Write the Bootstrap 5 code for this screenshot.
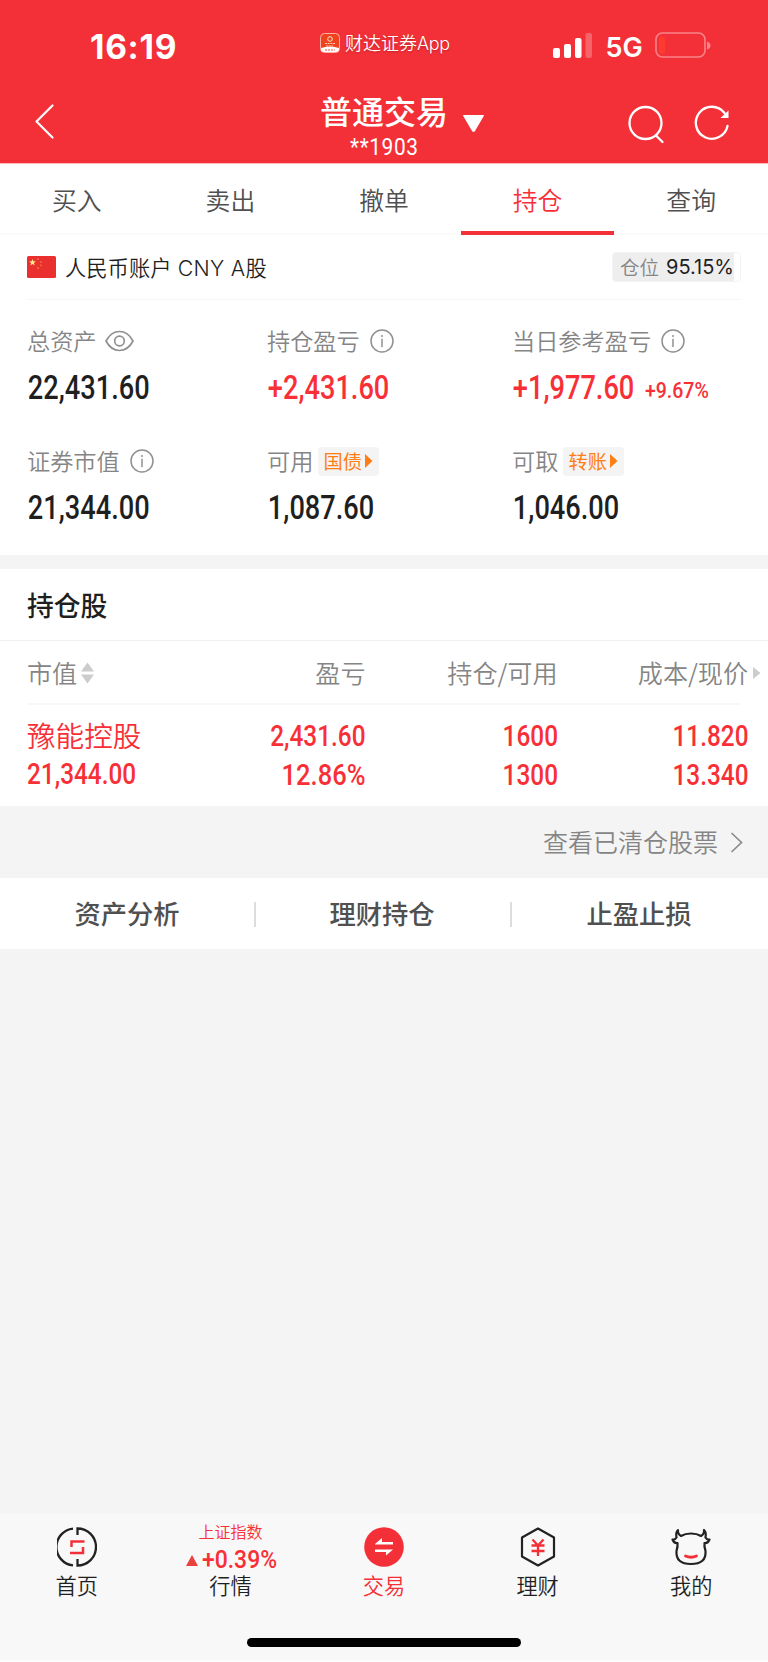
<!DOCTYPE html>
<html lang="zh-CN">
<head>
<meta charset="utf-8">
<meta name="viewport" content="width=device-width, initial-scale=1">
<title>普通交易</title>
<link href="https://cdn.jsdelivr.net/npm/bootstrap@5.3.0/dist/css/bootstrap.min.css" rel="stylesheet">
<style>
:root{--brand:#f33038;--up:#f82f36;--ink:#1f1f1f;--mute:#858585;--line:#f5f5f5}
body{font-family:"Noto Sans CJK SC",sans-serif;background:#f4f4f4;color:var(--ink);line-height:1;height:1662px;overflow:hidden}
svg{display:block;flex:none}
.top-area{background:var(--brand);height:163px;color:#fff;border-bottom:0}
.status-row{height:86px;padding:0 56px 0 90px}
.clock{font:700 33.5px/94px Inter,sans-serif;width:230px;letter-spacing:.7px}
.app-name{font-size:18px;line-height:84px;text-shadow:0 1px 2px rgba(90,0,0,.35);font-weight:350}
.app-name span{font-family:Inter,sans-serif;letter-spacing:-.3px}
.net{font:600 27px/95px Inter,sans-serif;letter-spacing:.2px}
.nav-row{height:77px;padding:0 38px 0 34px}
.page-name{font-size:32px;line-height:30px;height:33px;font-weight:500}
.cond{font-family:Roboto,sans-serif;display:inline-block;white-space:nowrap;transform:scaleX(var(--sx,.85));transform-origin:left center;font-weight:500}
.cond.end{transform-origin:right center}
.cond.mid{transform-origin:center}
.tabs-row{height:72px;border-top:1px solid #fbb;border-bottom:2px solid #fafafa}
.tabs-row a{color:#505050;text-decoration:none;font-size:24.8px;line-height:71px;height:71px;font-weight:350}
.tabs-row a.on{color:var(--up);box-shadow:inset 0 -4px var(--brand)}
.acct{height:65px;margin:0 27px;border-bottom:1px solid var(--line);font-size:21.3px}
.acct .acct-name{line-height:62px;font-weight:350;margin-left:9px}
.acct .latin{font-family:Inter,sans-serif;letter-spacing:.3px}
.posi{width:129px;height:30px;border:1px solid #f3f3f3;border-radius:4px;background:linear-gradient(90deg,#eee 95.15%,#fff 95.15%);font-size:19.5px;line-height:28px;padding-left:7px;color:#858585;font-weight:350}
.posi b{font:400 20px/29px Inter,sans-serif;color:var(--ink);letter-spacing:0;margin-left:7px}
.stats{display:grid;grid-template-columns:240px 245px 1fr;padding-left:27px;grid-template-rows:120px 134px;height:255px}
.lbl{height:36px;color:var(--mute);font-size:23.2px;line-height:34px;font-weight:350}
.lbl>span{height:36px}
.stats>div{padding-top:23px}
.stats .cond{font-size:32.3px;line-height:36px;height:36px;margin-top:11px;padding-left:1px;--sx:.842}
.chip{height:29px;width:61px;background:#f4f4f4;border-radius:4px;color:#ff7f16;font-size:19.3px;line-height:28px;padding-left:5px;margin-left:5px;font-weight:400}
.chip span{height:29px}
.up{color:var(--up)}
.hold{border-top:14px solid #f4f4f4}
.hold h2{margin:0;height:72px;line-height:71px;font-size:26.8px;font-weight:500;padding-left:27px;border-bottom:1px solid #f2f2f2}
.quad{display:grid;grid-template-columns:200px 138.5px 192px 190.5px}
.quad>*{text-align:right}
.quad>:first-child{text-align:left}
.thead-row{height:64px;margin-left:27px;width:714px;border-bottom:2px solid #f8f8f8;font-size:25.1px;line-height:63px;color:var(--mute);font-weight:350;white-space:nowrap}
.body-row{height:101px;margin-left:27px;padding-top:12px;color:var(--up)}
.body-row .cond{font-size:29px;line-height:39px;height:39px;display:block;--sx:.84}
.body-row .stock{font-size:28.6px;line-height:36px;height:38px;font-weight:350}
.more{height:72px;padding-right:25px;font-size:25px;color:var(--mute);font-weight:350}
.more span{line-height:68px;height:70px}
.acts{height:71px;font-size:26.3px;color:#505050;font-weight:500;line-height:70px;display:grid;grid-template-columns:254px 256px 258px}
.acts>*+*{background:linear-gradient(#ddd,#ddd) 0 24px/2px 25px no-repeat}
.tabbar{height:148px;background:#f8f8f8;border-bottom:2px solid #fcfcfc;padding-top:11px}
.tabbar .item{flex:1 1 0;font-size:21.2px;font-weight:350}
.tabbar .pic{height:45px;padding-top:2px}
.tabbar .cap{line-height:27px;height:28px;margin-top:1px}
.index-box{height:47px;margin-top:-2px}
.index-name{font-size:16px;line-height:16px;height:20px;font-weight:350}
.index-value{margin:1px 0 0 32px;height:25px}
.home-bar{width:274px;height:9px;border-radius:5px;background:#000;margin-top:39px}
</style>
</head>
<body>
<header class="top-area">
  <div class="status-row d-flex align-items-start">
    <div class="clock">16:19</div>
    <svg width="20" height="20" viewBox="0 0 20 20" style="margin-top:33px"><rect x=".5" y=".5" width="19" height="19" rx="4" fill="#f0421d" stroke="#ffb3a8"/><path d="M1 15Q10 12 19 15V16Q19 19 16 19H4Q1 19 1 16Z" fill="#fff"/><circle cx="10" cy="6" r="2.300" fill="none" stroke="#ffe2d6"/><path d="M5 10.500H15M6 13H14" stroke="#ffc9b6" stroke-dasharray="2 .7"/><path d="M5 17H15" stroke="#ee5040" stroke-dasharray="2 1"/></svg>
    <div class="app-name" style="margin-left:5px">财达证券<span>App</span></div>
    <svg class="ms-auto" width="40" height="60"><g fill="#fff"><rect x="0" y="48" width="7" height="10" rx="2"/><rect x="11" y="44" width="7" height="14" rx="2"/><rect x="22" y="38" width="6.500" height="20" rx="2"/><rect x="32.500" y="33" width="6.500" height="25" rx="2" opacity=".25"/></g></svg>
    <div class="net" style="margin:0 12px">5G</div>
    <svg width="57" height="60"><rect x="1" y="33" width="49" height="24" rx="6.500" fill="none" stroke="#f98388" stroke-width="1.600"/><rect x="4" y="36.500" width="6" height="17.500" rx="3" fill="#ff3b30"/><path d="M52 41.500q3.500 1 3.500 4t-3.500 4z" fill="#f98388"/></svg>
  </div>
  <div class="nav-row d-flex">
    <svg width="24" height="77" fill="none" stroke="#fff" stroke-width="2.200" stroke-linecap="round" stroke-linejoin="round"><path d="M18.500 19.500L2.500 35.500L18.500 51.500"/></svg>
    <div class="text-center" style="padding-top:9px;width:128px;margin-left:262px">
      <div class="page-name text-nowrap">普通交易</div>
      <div class="cond mid" style="font-size:24.6px;line-height:34px;font-weight:400;letter-spacing:.7px;margin-top:2px">**1903</div>
    </div>
    <svg width="24" height="77" style="margin-left:13px"><path d="M2.500 30.500Q1 29 3 29H22Q24 29 22.500 30.500L14 45Q12.500 47 11 45Z" fill="#fff"/></svg>
    <svg width="144" height="77" class="ms-auto" fill="none" stroke="#fff" stroke-width="2.300" stroke-linecap="round"><circle cx="59.500" cy="37" r="16"/><path d="M70 49.500L76.500 56"/><path d="M141.500 40A16 16 0 1 1 138.500 27"/><path d="M142.500 24.500V32H134.500Z" fill="#fff" stroke="none"/></svg>
  </div>
</header>
<nav class="tabs-row bg-white d-flex text-center">
  <a class="flex-fill" href="#">买入</a><a class="flex-fill" href="#">卖出</a><a class="flex-fill" href="#">撤单</a><a class="flex-fill on" href="#">持仓</a><a class="flex-fill" href="#">查询</a>
</nav>
<main>
<section class="bg-white">
  <div class="acct d-flex align-items-center">
    <svg width="29" height="22" viewBox="0 0 29 22"><rect width="29" height="22" rx="1.500" fill="#e9302f"/><path d="M5.500 3l.9 2.300 2.500.1-2 1.600.7 2.400-2.100-1.400-2.100 1.400.7-2.400-2-1.600 2.500-.1z" fill="#ffe98a"/><g fill="#f07840"><circle cx="11" cy="3" r=".9"/><circle cx="13.800" cy="5.800" r=".9"/><circle cx="13.800" cy="9.300" r=".9"/><circle cx="11" cy="12" r=".9"/></g></svg>
    <span class="acct-name">人民币账户<span class="latin"> CNY A</span>股</span>
    <div class="posi ms-auto d-flex text-nowrap">仓位<b>95.15%</b></div>
  </div>
  <div class="stats">
    <div><div class="lbl d-flex align-items-center"><span>总资产</span><svg class="ms-2" width="29" height="22" fill="none" stroke="#909090" stroke-width="1.700"><path d="M1 11Q6 1.500 14.500 1.500T28 11Q23 20.500 14.500 20.500T1 11Z"/><circle cx="14.500" cy="11" r="4.800"/></svg></div><div class="cond">22,431.60</div></div>
    <div><div class="lbl d-flex align-items-center"><span>持仓盈亏</span><svg width="24" height="24" style="margin-left:10px" fill="none" stroke="#909090" stroke-width="1.500"><circle cx="12" cy="12" r="11"/><path d="M12 9.800V18M12 6V8" /></svg></div><div class="cond up">+2,431.60</div></div>
    <div><div class="lbl d-flex align-items-center"><span>当日参考盈亏</span><svg width="24" height="24" style="margin-left:10px" fill="none" stroke="#909090" stroke-width="1.500"><circle cx="12" cy="12" r="11"/><path d="M12 9.800V18M12 6V8" /></svg></div><div class="d-flex up"><div class="cond" style="width:132px">+1,977.60</div><div class="cond" style="font-size:22.200px;line-height:41px;--sx:.88">+9.67%</div></div></div>
    <div><div class="lbl d-flex align-items-center"><span>证券市值</span><svg width="24" height="24" style="margin-left:10px" fill="none" stroke="#909090" stroke-width="1.500"><circle cx="12" cy="12" r="11"/><path d="M12 9.800V18M12 6V8" /></svg></div><div class="cond">21,344.00</div></div>
    <div><div class="lbl d-flex align-items-center"><span>可用</span><div class="chip d-flex align-items-center"><span>国债</span><svg width="8" height="14" style="margin-left:3px"><path d="M0 0L7.500 7L0 14Z" fill="#ff7f16"/></svg></div></div><div class="cond">1,087.60</div></div>
    <div><div class="lbl d-flex align-items-center"><span>可取</span><div class="chip d-flex align-items-center"><span>转账</span><svg width="8" height="14" style="margin-left:3px"><path d="M0 0L7.500 7L0 14Z" fill="#ff7f16"/></svg></div></div><div class="cond">1,046.00</div></div>
  </div>
</section>
<section class="hold bg-white">
  <h2>持仓股</h2>
  <div class="quad thead-row">
    <div class="d-flex align-items-center">市值<svg width="13" height="22" style="margin-left:4px" fill="#ccc"><path d="M0 9.500L6.500 .5L13 9.500ZM0 12.500L6.500 21.500L13 12.500Z"/></svg></div>
    <div>盈亏</div><div>持仓/可用</div>
    <div class="d-flex align-items-center justify-content-end">成本/现价<svg width="8" height="12" style="margin:0 -13px 0 5px" fill="#ccc"><path d="M0 0L7.500 6L0 12Z"/></svg></div>
  </div>
  <div class="quad body-row">
    <div><div class="stock">豫能控股</div><div class="cond">21,344.00</div></div>
    <div><div class="cond end">2,431.60</div><div class="cond end" style="--sx:.88">12.86%</div></div>
    <div><div class="cond end">1600</div><div class="cond end">1300</div></div>
    <div><div class="cond end">11.820</div><div class="cond end">13.340</div></div>
  </div>
</section>
<div class="more d-flex justify-content-end align-items-center"><span>查看已清仓股票</span><svg width="13" height="21" style="margin-left:12px" fill="none" stroke="#8c8c8c" stroke-width="1.700"><path d="M1.500 1L11.500 10.500L1.500 20"/></svg></div>
<div class="acts bg-white text-center"><div>资产分析</div><div>理财持仓</div><div>止盈止损</div></div>
</main>
<footer class="tabbar fixed-bottom">
  <div class="d-flex text-center">
    <div class="item"><div class="pic d-flex justify-content-center"><svg width="40" height="40" viewBox="0 0 40 40" fill="none" stroke="#222" stroke-width="2.300"><path d="M16 1.600A18.500 18.500 0 0 0 16 38.400M20.500 8V1.500A18.500 18.500 0 0 1 20.500 38.500V32"/><path d="M14.500 20V14.500H27.500M26 20V26H13" stroke="#f33038" stroke-width="2.500"/></svg></div><div class="cap">首页</div></div>
    <div class="item"><div class="index-box up"><div class="index-name">上证指数</div><div class="index-value d-flex align-items-center"><svg width="12" height="11" style="margin-top:7px"><path d="M0 11L6 0L12 11Z" fill="#e9413d"/></svg><div class="cond" style="font-size:26.500px;line-height:22px;height:22px;width:77px;margin-left:4px;margin-top:4px;text-align:left;--sx:.865">+0.39%</div></div></div><div class="cap">行情</div></div>
    <div class="item up"><div class="pic d-flex justify-content-center"><svg width="40" height="40" viewBox="0 0 40 40"><circle cx="20" cy="20" r="19.800" fill="#f33038"/><path d="M11 17L18 11V15H29V17.500H11ZM29 22.500L22 28.500V25H11V22.500Z" fill="#fff"/></svg></div><div class="cap">交易</div></div>
    <div class="item"><div class="pic d-flex justify-content-center"><svg width="40" height="40" viewBox="0 0 40 40" fill="none" stroke="#222" stroke-width="2.200" stroke-linejoin="round"><path d="M20 1.500L36 10.500V29.500L20 38.500L4 29.500V10.500Z"/><path d="M14.500 12.500L20 18.500L25.500 12.500M20 18V29M13.500 18.500H26.500M13.500 24H26.500" stroke="#f33038" stroke-width="2.300"/></svg></div><div class="cap">理财</div></div>
    <div class="item"><div class="pic d-flex justify-content-center"><svg width="40" height="40" viewBox="0 0 40 40" fill="none" stroke="#222" stroke-width="2.200" stroke-linejoin="round" stroke-linecap="round"><path d="M10 9Q6.500 7 7 3Q4.500 5 5.500 10.500Q4 13 1.500 12.500Q3 16.500 6.500 16Q7 19 5.500 24Q4.500 37 20 37T34.500 24Q33 19 33.500 16Q37 16.500 38.500 12.500Q36 13 34.500 10.500Q35.500 5 33 3Q33.500 7 30 9Q26 6.500 20 6.500T10 9Z"/><path d="M14.500 29Q20 31.500 25.500 29" stroke="#f33038" stroke-width="2.800"/></svg></div><div class="cap">我的</div></div>
  </div>
  <div class="home-bar mx-auto"></div>
</footer>
<script src="https://cdn.jsdelivr.net/npm/bootstrap@5.3.0/dist/js/bootstrap.bundle.min.js"></script>
</body>
</html>
